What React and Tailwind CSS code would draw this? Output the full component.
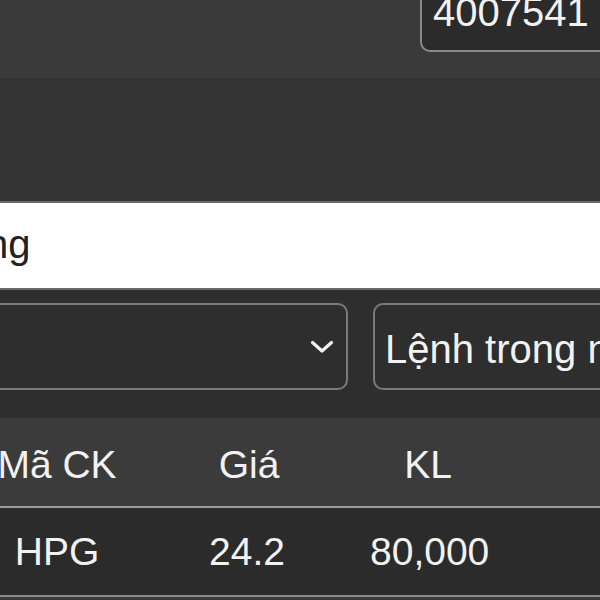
export default function App() {
  const font = { fontFamily: '"Liberation Sans", Arial, sans-serif' };
  return (
    <div className="w-[600px] h-[600px] overflow-hidden bg-[#2e2e2e] text-[#f2f2f2]" style={font}>
      {/* top band */}
      <div className="h-[78px] bg-[#3a3a3a] flex items-start">
        <div className="ml-[420px] h-[52px] flex-1 -mr-[20px] border-l-2 border-b-2 border-[#8a8a8a] rounded-bl-[10px] bg-[#2b2b2b] overflow-hidden">
          <div className="pl-[11px] -mt-[8px] text-[40px] leading-[40px]">4007541</div>
        </div>
      </div>
      {/* second band */}
      <div className="h-[123px] bg-[#333333]" />
      {/* white input */}
      <div className="h-[89px] bg-white border-y-2 border-[#6a6a6a] overflow-hidden">
        <div className="-ml-[14px] pt-[21px] text-[40px] leading-[40px] text-[#222222]">ng</div>
      </div>
      {/* selects */}
      <div className="h-[128px] bg-[#2e2e2e] pt-[13px] flex gap-[25px] overflow-hidden">
        <div className="shrink-0 w-[368px] -ml-[20px] h-[87px] border-2 border-[#7a7a7a] rounded-[10px] flex items-center justify-end pr-[12px]">
          <svg width="24" height="14" viewBox="0 0 24 14" fill="none" stroke="#f2f2f2" strokeWidth="3.2" strokeLinecap="round" strokeLinejoin="round">
            <path d="M2.5 2.5 L12 11 L21.5 2.5" />
          </svg>
        </div>
        <div className="flex-1 -mr-[40px] h-[87px] border-2 border-[#7a7a7a] rounded-[10px] pl-[10px] pt-[24px] overflow-hidden whitespace-nowrap text-[40px] leading-[40px]">
          Lệnh trong ngày
        </div>
      </div>
      {/* table header */}
      <div className="h-[90px] bg-[#3b3b3b] border-b-2 border-[#9a9a9a] -ml-[10px] grid grid-cols-[134px_250px_108px_1fr] pt-[27px] text-[39px] leading-[39px] text-center">
        <div className="whitespace-nowrap">Mã CK</div>
        <div>Giá</div>
        <div>KL</div>
        <div />
      </div>
      {/* row */}
      <div className="h-[89px] bg-[#2b2b2b] border-b-2 border-[#8a8a8a] -ml-[10px] grid grid-cols-[134px_246px_120px_1fr] pt-[24px] text-[39px] leading-[39px] text-center">
        <div>HPG</div>
        <div>24.2</div>
        <div className="text-left">80,000</div>
        <div />
      </div>
      <div className="h-[10px] bg-[#3a3a3a]" />
    </div>
  );
}
